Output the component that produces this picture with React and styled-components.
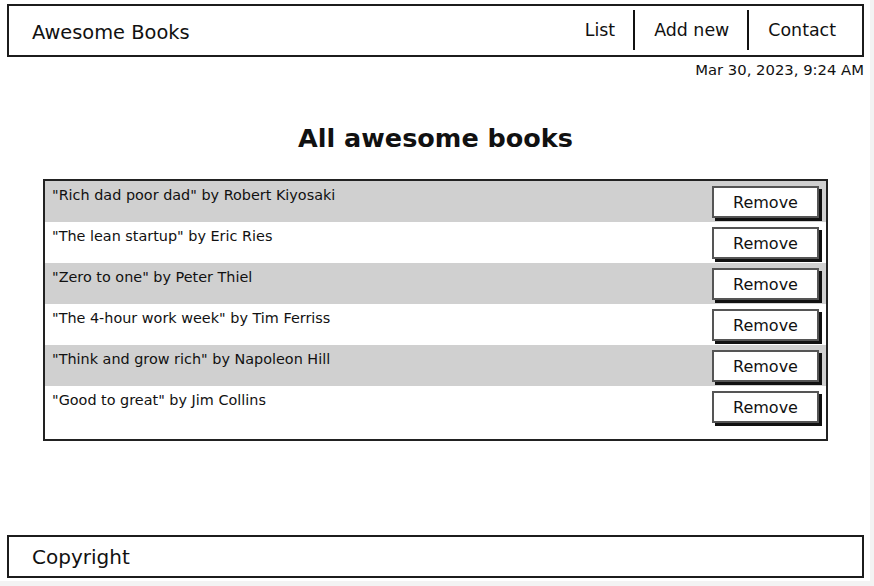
import styled, { createGlobalStyle } from "styled-components";

const GlobalStyle = createGlobalStyle`
	html, body {
		margin: 0;
		padding: 0;
		background: #f3f3f3;
	}
	body {
		font-family: "Comic Sans MS", "DejaVu Sans", sans-serif;
		color: #111;
	}
`;

const Page = styled.div`
	width: 870px;
	height: 581px;
	background: #fff;
	display: flex;
	flex-direction: column;
	box-sizing: border-box;
	padding: 4px 6px 3px 7px;
`;

const Header = styled.header`
	height: 53px;
	box-sizing: border-box;
	border: 2px solid #1c1c1c;
	display: flex;
	align-items: center;
	justify-content: space-between;
	padding: 0 26px 0 23px;
`;

const Brand = styled.h1`
	margin: 3px 0 0;
	font-size: 19.4px;
	font-weight: 400;
`;

const Nav = styled.nav`
	display: flex;
	align-items: center;
	height: 40px;
	margin-top: -1px;
`;

const NavItem = styled.a`
	display: flex;
	align-items: center;
	height: 100%;
	padding: 0 18px 0 19px;
	font-size: 17.4px;
	color: #111;
	text-decoration: none;
	border-left: ${(props) => (props.first ? "none" : "2px solid #111")};
	&:last-child {
		padding-right: 0;
	}
`;

const DateLine = styled.p`
	margin: 4px 0 0;
	text-align: right;
	font-size: 14.8px;
`;

const Title = styled.h2`
	margin: 45px 0 26px;
	text-align: center;
	font-size: 25.5px;
	font-weight: 700;
`;

const List = styled.ul`
	list-style: none;
	margin: 0 0 0 36px;
	padding: 0 0 12px;
	width: 785px;
	box-sizing: border-box;
	border: 2px solid #222;
`;

const Row = styled.li`
	height: 41px;
	box-sizing: border-box;
	display: flex;
	justify-content: space-between;
	align-items: flex-start;
	padding: 0 7px 0 7px;
	background: ${(props) => (props.shaded ? "#d0d0d0" : "#fff")};
`;

const BookText = styled.span`
	font-size: 14.4px;
	margin-top: 6px;
`;

const RemoveButton = styled.button`
	margin-top: 5px;
	width: 107px;
	height: 32px;
	background: #fff;
	border: 2px solid #555;
	box-shadow: 3px 3px 0 #111;
	font-family: inherit;
	font-size: 16px;
	color: #111;
	padding: 0;
`;

const Footer = styled.footer`
	margin-top: auto;
	height: 43px;
	box-sizing: border-box;
	border: 2px solid #1c1c1c;
	display: flex;
	align-items: center;
	padding: 0 23px;
	font-size: 20px;
`;

const books = [
	["Rich dad poor dad", "Robert Kiyosaki"],
	["The lean startup", "Eric Ries"],
	["Zero to one", "Peter Thiel"],
	["The 4-hour work week", "Tim Ferriss"],
	["Think and grow rich", "Napoleon Hill"],
	["Good to great", "Jim Collins"],
];

const App = () => {
	return (
		<Page>
			<GlobalStyle />
			<Header>
				<Brand>Awesome Books</Brand>
				<Nav>
					<NavItem first>List</NavItem>
					<NavItem>Add new</NavItem>
					<NavItem>Contact</NavItem>
				</Nav>
			</Header>
			<DateLine>Mar 30, 2023, 9:24 AM</DateLine>
			<Title>All awesome books</Title>
			<List>
				{books.map(([title, author], i) => (
					<Row key={title} shaded={i % 2 === 0}>
						<BookText>
							"{title}" by {author}
						</BookText>
						<RemoveButton>Remove</RemoveButton>
					</Row>
				))}
			</List>
			<Footer>Copyright</Footer>
		</Page>
	);
};

export default App;
